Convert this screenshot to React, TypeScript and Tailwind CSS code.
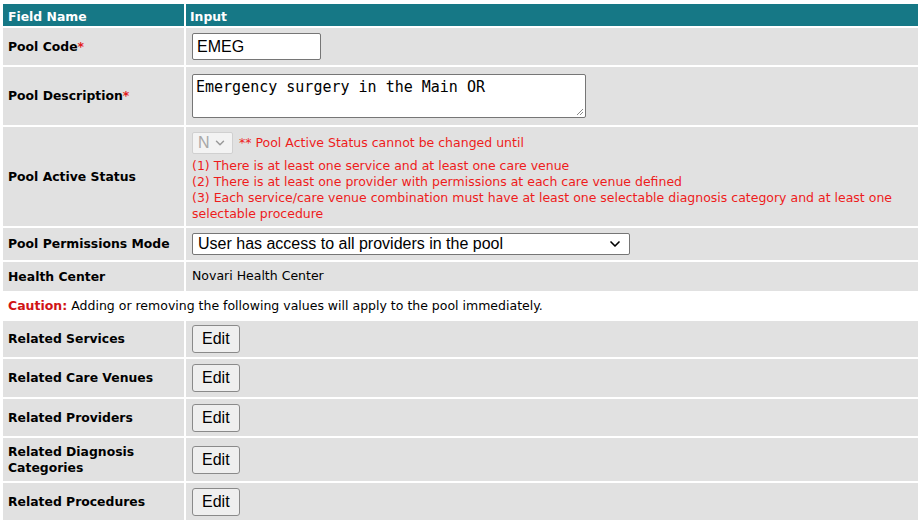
import { ChevronDown } from 'lucide-react';

const verdana = { fontFamily: '"DejaVu Sans", Verdana, sans-serif' };
const arial = { fontFamily: '"Liberation Sans", Arial, sans-serif' };

function Label({ children, required }: { children: React.ReactNode; required?: boolean }) {
    return (
        <td className="bg-[#e1e1e1] w-[181px] px-[5px] align-middle text-[12.4px] font-bold text-black leading-[16px]">
            {children}
            {required && <span className="text-[#e31b1b]">*</span>}
        </td>
    );
}

function EditButton() {
    return (
        <button className="h-[28px] px-[9px] bg-[#efefef] border border-[#8a8a8a] rounded-[3px] text-[16px] text-black leading-none" style={arial}>
            Edit
        </button>
    );
}

const related = [
    { label: 'Related Services', h: 'h-[36px]' },
    { label: 'Related Care Venues', h: 'h-[38px]' },
    { label: 'Related Providers', h: 'h-[37px]' },
    { label: 'Related Diagnosis Categories', h: 'h-[43px]' },
    { label: 'Related Procedures', h: 'h-[37px]' },
];

export default function App() {
    return (
        <div className="w-[923px] h-[523px] bg-white pl-[1px] pt-[2px]" style={verdana}>
            <table className="border-separate border-spacing-[2px] w-[919px]">
                <tbody>
                    <tr className="h-[22px]">
                        <td className="bg-[#167886] text-white font-bold text-[12.4px] px-[5px] pt-[3px] leading-[16px]">Field Name</td>
                        <td className="bg-[#167886] text-white font-bold text-[12.4px] px-[4px] pt-[3px] leading-[16px]">Input</td>
                    </tr>

                    <tr className="h-[37px]">
                        <Label required>Pool Code</Label>
                        <td className="bg-[#e1e1e1] px-[6px]">
                            <div className="w-[129px] h-[27px] bg-white border border-[#767676] rounded-[2px] flex items-center px-[4px] text-[16px] text-black" style={arial}>
                                EMEG
                            </div>
                        </td>
                    </tr>

                    <tr className="h-[58px]">
                        <Label required>Pool Description</Label>
                        <td className="bg-[#e1e1e1] px-[6px]">
                            <div className="relative w-[394px] h-[44px] bg-white border border-[#767676] rounded-[2px] px-[3px] pt-[3px] text-[15px] leading-[18px] text-black" style={{ fontFamily: '"DejaVu Sans Mono", monospace' }}>
                                Emergency surgery in the Main OR
                                <svg className="absolute right-[1px] bottom-[1px]" width="9" height="9" viewBox="0 0 9 9">
                                    <path d="M8 2 L2 8 M8 5 L5 8" stroke="#8a8a8a" strokeWidth="1" />
                                </svg>
                            </div>
                        </td>
                    </tr>

                    <tr className="h-[98px]">
                        <Label>Pool Active Status</Label>
                        <td className="bg-[#e1e1e1] px-[6px] pt-[5px] pb-[4px] align-top text-[12.5px] leading-[16px] text-[#ee1c1c]">
                            <div className="flex items-center gap-[6px] mb-[4px]">
                                <div className="w-[41px] h-[22px] bg-[#f3f3f3] border border-[#d0d0d0] rounded-[2px] flex items-center justify-between px-[5px] text-[#a8a8a8] text-[16px]" style={arial}>
                                    N
                                    <ChevronDown size={14} strokeWidth={2.5} className="text-[#9a9a9a]" />
                                </div>
                                <span>** Pool Active Status cannot be changed until</span>
                            </div>
                            <div>(1) There is at least one service and at least one care venue</div>
                            <div>(2) There is at least one provider with permissions at each care venue defined</div>
                            <div>(3) Each service/care venue combination must have at least one selectable diagnosis category and at least one selectable procedure</div>
                        </td>
                    </tr>

                    <tr className="h-[32px]">
                        <Label>Pool Permissions Mode</Label>
                        <td className="bg-[#e1e1e1] px-[6px]">
                            <div className="w-[438px] h-[22px] bg-white border border-[#767676] rounded-[2px] flex items-center justify-between pl-[5px] pr-[6px] text-[16px] text-black" style={arial}>
                                User has access to all providers in the pool
                                <ChevronDown size={16} strokeWidth={2.5} className="text-black" />
                            </div>
                        </td>
                    </tr>

                    <tr className="h-[29px]">
                        <Label>Health Center</Label>
                        <td className="bg-[#e1e1e1] px-[6px] text-[12.5px] text-black">Novari Health Center</td>
                    </tr>

                    <tr className="h-[26px]">
                        <td colSpan={2} className="px-[5px] text-[12.5px] text-black">
                            <span className="font-bold text-[#d11414]">Caution:</span> Adding or removing the following values will apply to the pool immediately.
                        </td>
                    </tr>

                    {related.map((r) => (
                        <tr key={r.label} className={r.h}>
                            <Label>{r.label}</Label>
                            <td className="bg-[#e1e1e1] px-[6px]">
                                <EditButton />
                            </td>
                        </tr>
                    ))}
                </tbody>
            </table>
        </div>
    );
}
